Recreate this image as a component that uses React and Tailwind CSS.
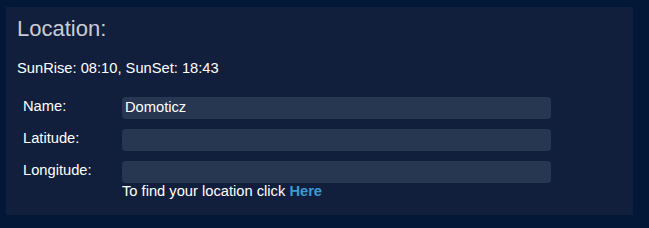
import React from "react";

export default function App() {
  const rows = [
    { label: "Name:", value: "Domoticz" },
    { label: "Latitude:", value: "" },
    { label: "Longitude:", value: "" },
  ];
  return (
    <div
      className="w-[649px] h-[228px] bg-[#031836] pl-[6px] pt-[7px]"
      style={{ fontFamily: '"Liberation Sans", Arial, sans-serif' }}
    >
      <div className="w-[627px] h-[208px] bg-[#121f3c] pl-[11px] pt-[9px]">
        <div className="text-[22px] leading-[25px] text-[#c9ccd3]">Location:</div>
        <div className="mt-[19px] text-[14.7px] leading-[17px] text-white">
          SunRise: 08:10, SunSet: 18:43
        </div>
        <div className="mt-[20px] flex flex-col gap-[10px]">
          {rows.map((r) => (
            <div key={r.label} className="flex items-start">
              <div className="w-[105px] pl-[6px] pt-[1px] text-[14.7px] leading-[17px] text-white">
                {r.label}
              </div>
              <div className="w-[429px] h-[22px] rounded-[4px] bg-[#283751] pl-[3px] pt-[2px] text-[14.7px] leading-[17px] text-white">
                {r.value}
              </div>
            </div>
          ))}
        </div>
        <div className="ml-[105px] text-[14.7px] leading-[17px] text-white">
          To find your location click{" "}
          <span className="font-bold text-[#3a9ad6]">Here</span>
        </div>
      </div>
    </div>
  );
}
